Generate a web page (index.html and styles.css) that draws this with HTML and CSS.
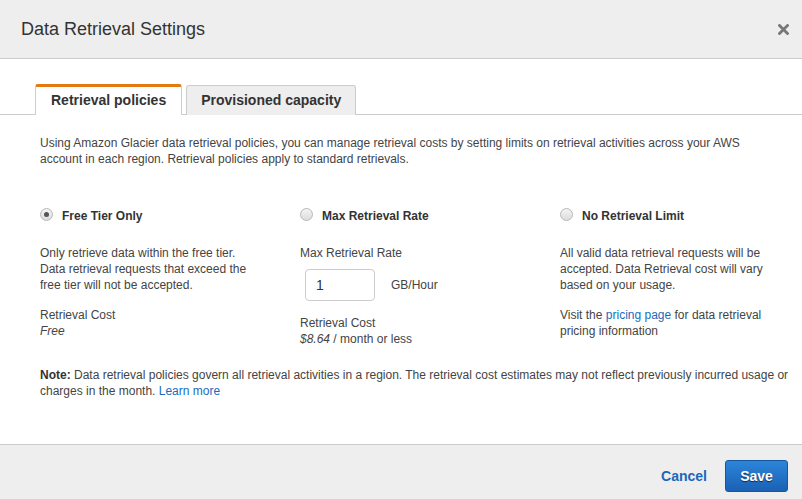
FILE: index.html
```html
<!DOCTYPE html>
<html lang="en">
<head>
<meta charset="utf-8">
<title>Data Retrieval Settings</title>
<link rel="stylesheet" href="styles.css">
</head>
<body>
<div class="modal">
  <header class="modal-header">
    <h1 class="modal-title">Data Retrieval Settings</h1>
    <button class="close" aria-label="Close">
      <svg width="11" height="11" viewBox="0 0 11 11"><path d="M1.5 1.5 L9.5 9.5 M9.5 1.5 L1.5 9.5" stroke="#777" stroke-width="2.8" stroke-linecap="square"/></svg>
    </button>
  </header>
  <main class="modal-body">
    <nav class="tabs">
      <div class="tab active">Retrieval policies</div>
      <div class="tab">Provisioned capacity</div>
    </nav>
    <section class="tab-content">
      <p class="intro">Using Amazon Glacier data retrieval policies, you can manage retrieval costs by setting limits on retrieval activities across your AWS account in each region. Retrieval policies apply to standard retrievals.</p>
      <div class="options">
        <div class="option">
          <label class="option-title"><span class="radio checked"></span>Free Tier Only</label>
          <p class="desc">Only retrieve data within the free tier. Data retrieval requests that exceed the free tier will not be accepted.</p>
          <p class="cost">Retrieval Cost<br><em>Free</em></p>
        </div>
        <div class="option">
          <label class="option-title"><span class="radio"></span>Max Retrieval Rate</label>
          <p class="desc">Max Retrieval Rate</p>
          <div class="rate-row">
            <input class="rate-input" type="text" value="1">
            <span class="unit">GB/Hour</span>
          </div>
          <p class="cost">Retrieval Cost<br><em>$8.64</em> / month or less</p>
        </div>
        <div class="option">
          <label class="option-title"><span class="radio"></span>No Retrieval Limit</label>
          <p class="desc">All valid data retrieval requests will be accepted. Data Retrieval cost will vary based on your usage.</p>
          <p class="cost">Visit the <a href="#">pricing page</a> for data retrieval pricing information</p>
        </div>
      </div>
      <p class="note"><strong>Note:</strong> Data retrieval policies govern all retrieval activities in a region. The retrieval cost estimates may not reflect previously incurred usage or charges in the month. <a href="#">Learn more</a></p>
    </section>
  </main>
  <footer class="modal-footer">
    <button class="btn-link">Cancel</button>
    <button class="btn-primary">Save</button>
  </footer>
</div>
</body>
</html>
```
FILE: styles.css
```css
html, body {
  margin: 0;
  padding: 0;
  background: #fff;
}
body {
  font-family: "Liberation Sans", Arial, sans-serif;
  font-size: 12px;
  line-height: 16px;
  color: #444;
  width: 802px;
  height: 499px;
  overflow: hidden;
}
.modal {
  display: flex;
  flex-direction: column;
  height: 499px;
}
.modal-header {
  height: 58px;
  background: #eeeeee;
  border-bottom: 1px solid #cccccc;
  display: flex;
  align-items: center;
  justify-content: space-between;
  padding: 0 13px 0 21px;
  box-sizing: content-box;
}
.modal-title {
  margin: 0;
  font-size: 18px;
  font-weight: normal;
  color: #333;
  line-height: 22px;
  padding-bottom: 1px;
}
.close {
  border: 0;
  background: none;
  padding: 0;
  width: 11px;
  height: 11px;
  display: flex;
  margin-top: 1px;
}
.modal-body {
  flex: 1;
  padding-top: 25px;
}
.tabs {
  display: flex;
  align-items: flex-end;
  gap: 4px;
  padding-left: 35px;
  border-bottom: 1px solid #cccccc;
  height: 30px;
}
.tab {
  box-sizing: border-box;
  padding: 0 14px 0 14px;
  border: 1px solid #cccccc;
  border-bottom: 0;
  border-radius: 3px 3px 0 0;
  background: #eeeeee;
  font-size: 14px;
  font-weight: bold;
  color: #333;
  margin-bottom: -1px;
  height: 30px;
  line-height: 28px;
}
.tab.active {
  background: #fff;
  border-top: 3px solid #e47911;
  height: 31px;
  line-height: 27px;
  padding: 0 15px;
}
.tab-content {
  padding: 0 10px 0 40px;
}
.intro {
  margin: 20px 0 0;
  max-width: 730px;
}
.options {
  display: grid;
  grid-template-columns: repeat(3, 260px);
  margin-top: 41px;
}
.option {
  padding-right: 44px;
}
.option-title {
  display: flex;
  align-items: center;
  font-weight: bold;
  color: #333;
  height: 16px;
}
.radio {
  box-sizing: border-box;
  width: 13px;
  height: 13px;
  border-radius: 50%;
  border: 1px solid #b8b8b8;
  background: linear-gradient(#f4f4f4, #dcdcdc);
  margin: -3px 9px 0 0;
  display: flex;
  align-items: center;
  justify-content: center;
}
.radio.checked::after {
  content: "";
  width: 5px;
  height: 5px;
  border-radius: 50%;
  background: #555;
}
.desc {
  margin: 21px 0 0;
}
.cost {
  margin: 14px 0 0;
}
.cost em {
  font-style: italic;
}
.rate-row {
  display: flex;
  align-items: center;
  margin-top: 8px;
  padding-left: 5px;
}
.rate-input {
  box-sizing: border-box;
  width: 70px;
  height: 32px;
  border: 1px solid #cccccc;
  border-radius: 4px;
  padding: 0 10px;
  font-family: "Liberation Sans", Arial, sans-serif;
  font-size: 14px;
  color: #333;
  outline: none;
}
.unit {
  margin-left: 16px;
}
a {
  color: #1a6bbd;
  text-decoration: none;
}
.note {
  margin: 20px 0 0;
}
.note strong {
  color: #333;
}
.modal-footer {
  height: 54px;
  background: #eeeeee;
  border-top: 1px solid #cccccc;
  display: flex;
  align-items: flex-start;
  justify-content: flex-end;
  gap: 18px;
  padding: 15px 14px 0 0;
  box-sizing: border-box;
  height: 55px;
}
.btn-link {
  border: 0;
  background: none;
  padding: 0;
  height: 32px;
  font-family: "Liberation Sans", Arial, sans-serif;
  font-size: 14px;
  font-weight: bold;
  color: #1b67b9;
}
.btn-primary {
  box-sizing: border-box;
  width: 63px;
  height: 32px;
  border: 1px solid #1a55a0;
  border-radius: 3px;
  background: linear-gradient(#2b85d9, #1b61b4);
  font-family: "Liberation Sans", Arial, sans-serif;
  font-size: 14px;
  font-weight: bold;
  color: #fff;
  text-shadow: 0 1px 1px rgba(0, 0, 0, 0.6);
}
```
